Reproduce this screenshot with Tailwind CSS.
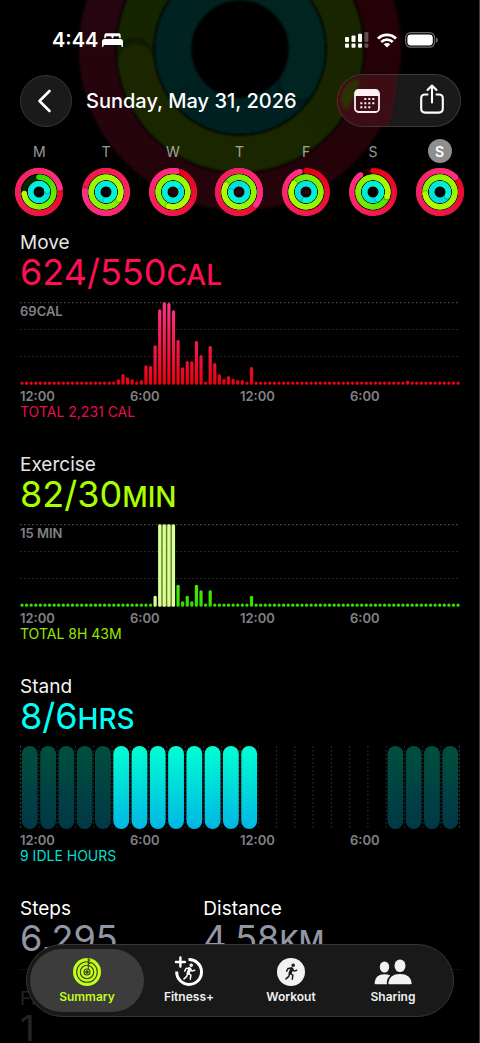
<!DOCTYPE html>
<html lang="en">
<head>
<meta charset="utf-8">
<meta name="viewport" content="width=device-width, initial-scale=1">
<title>Activity Summary</title>
<script src="https://cdn.jsdelivr.net/npm/@tailwindcss/browser@4"></script>
</head>
<body class="bg-black">
<div class="relative h-screen overflow-hidden border-r border-neutral-700 bg-black font-['Inter','Liberation_Sans',sans-serif] text-white">

  <!-- Dimmed rings behind the header -->
  <svg id="hero" class="absolute left-1/2 top-[-121px] size-[340px] -translate-x-1/2 opacity-15 blur-[1px]" viewBox="-170 -170 340 340" aria-hidden="true"></svg>

  <div class="relative">
    <!-- Status bar -->
    <div class="flex h-[74px] items-center justify-between pb-[2px] pr-[41px] pl-[52px] pt-2">
      <div class="flex items-center gap-1">
        <span class="text-[20px] leading-6 font-semibold">4:44</span>
        <svg class="h-[14px] w-[21px]" viewBox="0 0 21 14" fill="#fff" aria-hidden="true">
          <path d="M2.3 5.2V2.4Q2.3 .3 4.4 .3H16.6Q18.700 .3 18.700 2.4V5.200H17.200V4.400Q17.200 3.300 16.100 3.300H12.400Q11.300 3.300 11.300 4.400V5.200H9.700V4.400Q9.700 3.300 8.600 3.300H4.900Q3.800 3.300 3.800 4.400V5.200Z"/>
          <path d="M0 8.600Q0 6 2.600 6H18.400Q21 6 21 8.600V13.200Q21 14 20.200 14Q19.400 14 19.400 13.200V12H1.600V13.200Q1.600 14 .8 14Q0 14 0 13.200Z"/>
        </svg>
      </div>
      <div class="flex items-center gap-2">
        <svg class="h-4 w-6" viewBox="0 0 24 16" fill="#fff" aria-hidden="true">
          <rect x="0" y="5" width="4" height="5" rx="1"/><rect x="6.500" y="3.600" width="4" height="6.400" rx="1"/><rect x="13" y="1.800" width="4" height="8.200" rx="1"/><rect x="19.400" y="0" width="4" height="10" rx="1" opacity=".3"/>
          <rect x="0" y="11.600" width="4" height="4.200" rx="1"/><rect x="6.500" y="11.600" width="4" height="4.200" rx="1"/><rect x="13" y="11.600" width="4" height="4.200" rx="1"/><rect x="19.400" y="11.600" width="4" height="4.200" rx="1" opacity=".3"/>
        </svg>
        <svg class="h-[15px] w-5" viewBox="0 0 20 15" fill="none" stroke="#fff" stroke-width="2.700" aria-hidden="true">
          <path d="M1 5.600A12.600 12.600 0 0 1 19 5.600"/><path d="M4.300 9A8 8 0 0 1 15.700 9"/>
          <path d="M10 14.600L6.700 11.300A4.700 4.700 0 0 1 13.300 11.300Z" fill="#fff" stroke="none"/>
        </svg>
        <svg class="h-4 w-[33px]" viewBox="0 0 33 16" aria-hidden="true">
          <rect x=".6" y=".6" width="29" height="14.600" rx="5" fill="none" stroke="#6b6b6b" stroke-width="1.200"/>
          <rect x="2.400" y="2.400" width="25.400" height="11" rx="3.400" fill="#fff"/><path d="M31 5.400Q33 6 33 8Q33 10 31 10.500Z" fill="#6b6b6b"/>
        </svg>
      </div>
    </div>

    <!-- Title bar -->
    <header class="flex h-[53px] items-center pl-5 pr-[18px]">
      <button type="button" aria-label="Back" class="flex size-[52px] shrink-0 items-center justify-center rounded-full border border-[#353535] bg-[#1a1a1a]">
        <svg class="-ml-1 h-6 w-4" viewBox="0 0 16 24" fill="none" stroke="#fff" stroke-width="2.600" stroke-linecap="round" stroke-linejoin="round" aria-hidden="true"><path d="M13.500 2L3.500 12L13.500 22"/></svg>
      </button>
      <h1 class="ml-[14px] flex-1 whitespace-nowrap text-[20px] leading-6 font-medium">Sunday, May 31, 2026</h1>
      <div class="relative flex h-[53px] w-[124px] shrink-0 items-center overflow-hidden rounded-full border border-[#3a3a3a] border-l-[#7c2030] bg-[#1a1a1a]">
        <svg class="absolute inset-0 size-full" viewBox="0 0 124 53" preserveAspectRatio="none" aria-hidden="true">
          <defs><filter id="soft" x="-20%" y="-20%" width="140%" height="140%"><feGaussianBlur stdDeviation="1.500"/></filter></defs>
          <path d="M-4 -4H60Q60 30 50 57H-4Z" fill="#3c0f19" filter="url(#soft)"/>
          <path d="M22 4Q20 22 8 37Q0 28 5 16Q10 6 22 4Z" fill="#2c3303" filter="url(#soft)"/>
        </svg>
        <button type="button" aria-label="Calendar" class="relative flex h-full flex-1 items-center justify-center pr-1">
          <svg class="h-6 w-[26px]" viewBox="0 0 26 24" aria-hidden="true">
            <rect x="1" y="1" width="24" height="22" rx="3.500" fill="none" stroke="#ffeef3" stroke-width="1.800"/>
            <path d="M1 7V4Q1 1 4 1H22Q25 1 25 4V7Z" fill="#ffeef3"/>
            <g fill="#ffeef3"><path d="M10.300 9h2v2h-2zM14.300 9h2v2h-2zM18.300 9h2v2h-2zM6.300 13.200h2v2h-2zM10.300 13.200h2v2h-2zM14.300 13.200h2v2h-2zM18.300 13.200h2v2h-2zM6.300 17.300h2v2h-2zM10.300 17.300h2v2h-2zM14.300 17.300h2v2h-2z"/></g>
          </svg>
        </button>
        <button type="button" aria-label="Share" class="relative flex h-full flex-1 items-center justify-center pr-1">
          <svg class="mb-1 ml-2 h-[30px] w-6" viewBox="0 0 24 30" fill="none" stroke="#fff" stroke-width="2.100" stroke-linecap="round" stroke-linejoin="round" aria-hidden="true">
            <path d="M7.500 10.500H5Q1.200 10.500 1.200 14.300V24.500Q1.200 28.600 5.200 28.600H18.800Q22.800 28.600 22.800 24.500V14.300Q22.800 10.500 19 10.500H16.500"/><path d="M12 18.500V2M7.500 6L12 1.500L16.500 6"/>
          </svg>
        </button>
      </div>
    </header>

    <!-- Week strip -->
    <div id="week" class="grid grid-cols-7 pl-1.5 pr-[6px] pt-3"></div>

    <main class="flex flex-col gap-[35px] pl-5 pr-[19px] pt-[17px]">
      <section>
        <h2 class="text-[19px] leading-5 text-neutral-200">Move</h2>
        <p class="text-[36px] leading-[38px] text-[#fd0f54]">624/550<span class="text-[28px] leading-none font-medium">CAL</span></p>
        <div class="relative mt-[11px]">
          <svg id="move" class="block w-full" viewBox="0 0 440 83" role="img" aria-label="Calories by quarter hour"></svg>
          <span class="absolute left-0 top-[1px] text-[13px] leading-4 font-semibold text-[#808085]">69CAL</span>
        </div>
        <div class="mt-[3px] grid grid-cols-4 text-[13px] leading-4 font-semibold text-[#808085]"><span>12:00</span><span>6:00</span><span>12:00</span><span>6:00</span></div>
        <p class="text-[14px] leading-4 text-[#e30f4d]">TOTAL 2,231 CAL</p>
      </section>
      <section>
        <h2 class="text-[19px] leading-5 text-neutral-200">Exercise</h2>
        <p class="text-[36px] leading-[38px] text-[#a9ff00]">82/30<span class="text-[28px] leading-none font-medium">MIN</span></p>
        <div class="relative mt-[11px]">
          <svg id="exercise" class="block w-full" viewBox="0 0 440 83" role="img" aria-label="Exercise minutes by quarter hour"></svg>
          <span class="absolute left-0 top-[1px] text-[13px] leading-4 font-semibold text-[#808085]">15 MIN</span>
        </div>
        <div class="mt-[3px] grid grid-cols-4 text-[13px] leading-4 font-semibold text-[#808085]"><span>12:00</span><span>6:00</span><span>12:00</span><span>6:00</span></div>
        <p class="text-[14px] leading-4 text-[#98e600]">TOTAL 8H 43M</p>
      </section>
      <section>
        <h2 class="text-[19px] leading-5 text-neutral-100">Stand</h2>
        <p class="text-[36px] leading-[38px] text-[#00fff6]">8/6<span class="text-[28px] leading-none font-medium">HRS</span></p>
        <div class="mt-[11px]"><svg id="stand" class="block w-full" viewBox="0 0 440 83" role="img" aria-label="Stand hours"></svg></div>
        <div class="mt-[3px] grid grid-cols-4 text-[13px] leading-4 font-semibold text-[#808085]"><span>12:00</span><span>6:00</span><span>12:00</span><span>6:00</span></div>
        <p class="text-[14px] leading-4 text-[#00dfd2]">9 IDLE HOURS</p>
      </section>
      <section>
        <div class="grid grid-cols-12">
          <div class="col-span-5"><h2 class="text-[19px] leading-5">Steps</h2><p class="text-[36px] leading-[38px] text-[#9296a3]">6,295</p></div>
          <div class="col-span-7"><h2 class="text-[19px] leading-5">Distance</h2><p class="text-[36px] leading-[38px] text-[#9296a3]">4.58<span class="text-[28px] leading-none font-medium">KM</span></p></div>
        </div>
        <div class="mt-3 border-t border-[#111] pt-[19px] text-[#242424]"><h2 class="text-[19px] leading-5">Flights Climbed</h2><p class="text-[36px] leading-[38px]">1</p></div>
      </section>
    </main>
  </div>

  <!-- Tab bar -->
  <nav class="absolute left-[26px] right-[25px] bottom-[26px] grid h-[73px] grid-cols-4 rounded-full border border-[#363636] bg-[#191919] px-[9px] py-1 text-[12px] leading-4 font-semibold text-[#f0f0f0]">
    <a href="#summary" aria-current="page" class="-mx-1.5 flex flex-col items-center gap-[3px] rounded-full bg-[#3c3c3c] pt-[9px] text-[#c1ff17]">
      <svg class="size-7" viewBox="-14 -14 28 28" aria-hidden="true">
        <circle r="14" fill="#c1ff17"/>
        <g fill="none" stroke="#3b3f2c" stroke-width="1.100"><circle r="10.300"/><circle r="6.700"/><circle r="3"/><path d="M1.300 -14V-2.500"/></g>
        <path d="M1.600 -13L4 -12L1.600 -11Z M1.600 -9.300L4 -8.400L1.600 -7.500Z" fill="#3b3f2c"/><circle r="1.800" fill="#3b3f2c"/>
      </svg>
      <span>Summary</span>
    </a>
    <a href="#fitness" class="flex flex-col items-center gap-[3px] pt-[9px]">
      <svg class="size-7 overflow-visible" viewBox="-14 -14 28 28" fill="none" stroke="#fff" stroke-linecap="round" stroke-linejoin="round" aria-hidden="true">
        <path d="M-.5 -12.400A12.400 12.400 0 1 1 -12.300 -.5" stroke-width="3" stroke-linecap="butt"/>
        <path d="M-8.600 -14.500V-5.500M-13.100 -10H-4.100" stroke-width="2.400"/>
        <use href="#runner"/>
      </svg>
      <span>Fitness+</span>
    </a>
    <a href="#workout" class="flex flex-col items-center gap-[3px] pt-[9px]">
      <svg class="size-7" viewBox="-14 -14 28 28" fill="none" stroke="#191919" stroke-linecap="round" stroke-linejoin="round" aria-hidden="true">
        <defs>
          <g id="runner">
            <circle cx="2.200" cy="-6.700" r="1" stroke-width="1.600"/>
            <path d="M.8 -3L-.9 1.200" stroke-width="3.200"/>
            <path d="M.6 -3.900L-3 -3.400L-4.300 -.8M1.300 -3L3 -.9L5.700 -1.700M-.6 1.500L1.900 3.200L1.300 7.200M-1.400 1.400L-2.200 4.400L-5 6.900" stroke-width="1.500"/>
          </g>
        </defs>
        <circle r="14" fill="#f2f2f2" stroke="none"/>
        <use href="#runner"/>
      </svg>
      <span>Workout</span>
    </a>
    <a href="#sharing" class="flex flex-col items-center gap-[3px] pt-[9px]">
      <svg class="h-7 w-[38px]" viewBox="0 0 38 28" fill="#f2f2f2" aria-hidden="true">
        <ellipse cx="10.500" cy="9" rx="4.700" ry="5.500"/><path d="M1.800 26.300Q.6 26.300 .6 25Q1 16.400 10.500 16.200Q14 16.200 16.300 17.400Q12.800 20.200 12.800 24.500Q12.800 25.500 13.200 26.300Z"/>
        <ellipse cx="26" cy="7.700" rx="5.500" ry="6.300"/><path d="M15.500 26.300Q14.300 26.300 14.300 25Q15.400 16 26 16Q36.600 16 37.700 25Q37.700 26.300 36.500 26.300Z"/>
      </svg>
      <span>Sharing</span>
    </a>
  </nav>
</div>

<script>
  const NS = 'http://www.w3.org/2000/svg';
  function add(parent, tag, attrs) {
    const el = document.createElementNS(NS, tag);
    for (const k in attrs) el.setAttribute(k, attrs[k]);
    parent.appendChild(el);
    return el;
  }
  const mix = (a, b, t) => 'rgb(' + a.map((v, i) => Math.round(v + (b[i] - v) * t)).join(',') + ')';

  // A progress ring; laps beyond the first are drawn over the earlier ones.
  function ring(svg, r, w, f, from, to) {
    const track = mix([0, 0, 0], from, 0.17);
    add(svg, 'circle', { r, fill: 'none', stroke: f < 1 ? track : mix(from, to, 0.8), 'stroke-width': w });
    const at = t => [r * Math.sin(t * 2 * Math.PI), -r * Math.cos(t * 2 * Math.PI)];
    const start = Math.max(0, f - 1), n = 60;
    const c0 = at(start);
    add(svg, 'circle', { cx: c0[0], cy: c0[1], r: w / 2, fill: mix(from, to, start / f) });
    for (let i = 0; i < n; i++) {
      const t0 = start + (f - start) * i / n, t1 = start + (f - start) * (i + 1) / n;
      const a = at(t0), b = at(Math.min(t1 + 0.008, f));
      if (i === Math.floor(n * 0.6) && f > 0.9) {
        const h = at(f + w * 0.03 / r);
        add(svg, 'circle', { cx: h[0], cy: h[1], r: w / 2, fill: '#000', opacity: 0.25 });
      }
      add(svg, 'path', { d: `M${a}A${r} ${r} 0 0 1 ${b}`, fill: 'none', stroke: mix(from, to, t0 / f), 'stroke-width': w });
    }
    const e = at(f);
    add(svg, 'circle', { cx: e[0], cy: e[1], r: w / 2, fill: mix(from, to, 1) });
  }
  const RED = [[228, 0, 20], [255, 50, 135]], GREEN = [[50, 220, 0], [182, 255, 0]], CYAN = [[0, 200, 228], [0, 248, 212]];
  function rings(svg, radii, w, v) {
    [RED, GREEN, CYAN].forEach((c, i) => ring(svg, radii[i], w, v[i], c[0], c[1]));
  }
  rings(document.getElementById('hero'), [143, 105, 67], 36, [1.13, 2.73, 1.33]);

  const days = [['M', 1.22, 0.735, 2.22], ['T', 1.76, 2.33, 2.5], ['W', 1.03, 2.55, 2.1], ['T', 1.355, 1.83, 1.75],
                ['F', 0.955, 1.85, 1.52], ['S', 0.9, 1.3, 2.4], ['S', 1.13, 2.73, 1.33]];
  const week = document.getElementById('week');
  days.forEach((d, i) => {
    const b = document.createElement('button');
    b.type = 'button';
    b.className = 'flex flex-col items-center gap-[5px]';
    const s = document.createElement('span');
    s.className = i === 6
      ? 'flex size-6 items-center justify-center rounded-full bg-[#8e8e90] text-[14px] font-semibold text-white'
      : 'flex size-6 items-center justify-center text-[14px] text-white/60';
    s.textContent = d[0];
    b.appendChild(s);
    const svg = add(b, 'svg', { viewBox: '-24 -24 48 48', class: 'size-12' });
    add(svg, 'circle', { r: 14, fill: 'none', stroke: '#000', 'stroke-width': 16 });
    rings(svg, [21.2, 14.8, 8.4], 5.4, d.slice(1));
    week.appendChild(b);
  });

  function gradient(svg, id, top, bottom) {
    const g = add(add(svg, 'defs', {}), 'linearGradient', { id, gradientUnits: 'userSpaceOnUse', x1: 0, x2: 0, y1: 0, y2: 83 });
    add(g, 'stop', { offset: 0, 'stop-color': top });
    add(g, 'stop', { offset: 1, 'stop-color': bottom });
  }
  function bars(svg, fillOf, data) {
    [0.6, 27.5, 54.5].forEach((y, i) => add(svg, 'line', { x1: 0, x2: 440, y1: y, y2: y, stroke: i ? '#2c2c2c' : '#484848', 'stroke-width': 1.2, 'stroke-dasharray': '1.6 2.4' }));
    for (let i = 0; i < 96; i++) {
      const h = data[i] || 3.3;
      add(svg, 'rect', { x: 2 + 4.59 * i - 1.6, y: 82.7 - h, width: 3.2, height: h, rx: 1.5, fill: fillOf(i) });
    }
  }
  const move = document.getElementById('move');
  gradient(move, 'gm', '#ff3389', '#ea0010');
  bars(move, () => 'url(#gm)', { 21: 5.5, 22: 10.7, 23: 7.5, 24: 5.5, 26: 4.8, 27: 19.4, 28: 18.7, 29: 39.4, 30: 75.4, 31: 82.4, 32: 81.6, 33: 74.4,
    34: 44.7, 35: 17.4, 36: 23.7, 37: 23.4, 38: 43.7, 39: 29.7, 41: 38.7, 42: 21.7, 43: 10.4, 44: 5.6, 45: 8.7, 46: 6, 47: 4.6, 48: 4.6, 50: 17.7, 84: 4.2 });

  const ex = document.getElementById('exercise');
  gradient(ex, 'ge', '#a8ff00', '#2fdf00');
  add(ex, 'rect', { x: 139, y: 0.5, width: 15, height: 82, fill: '#5f7c30' });
  bars(ex, i => i >= 29 && i <= 33 ? '#dcff94' : 'url(#ge)', { 29: 11, 30: 82.4, 31: 82.4, 32: 82.4, 33: 82.4, 34: 22, 35: 5.5, 36: 11, 37: 5.5, 38: 22, 39: 16.5, 41: 16.5, 50: 11 });

  const st = document.getElementById('stand');
  gradient(st, 'gs', '#00ffd2', '#00b6e3');
  gradient(st, 'gd', '#004f3e', '#003847');
  for (let i = 0; i <= 24; i++) {
    const x = 0.6 + 18.28 * i;
    add(st, 'line', { x1: x, x2: x, y1: 0, y2: 82, stroke: i % 24 ? '#2e2e2e' : '#484848', 'stroke-width': 1.2, 'stroke-dasharray': '1.6 2.4' });
    const on = i >= 5 && i <= 12, idle = i < 5 || (i >= 20 && i < 24);
    if (on || idle) add(st, 'rect', { x: x + 1.3, y: 0, width: 15.8, height: 83, rx: 7.9, fill: on ? 'url(#gs)' : 'url(#gd)' });
  }
</script>
</body>
</html>
